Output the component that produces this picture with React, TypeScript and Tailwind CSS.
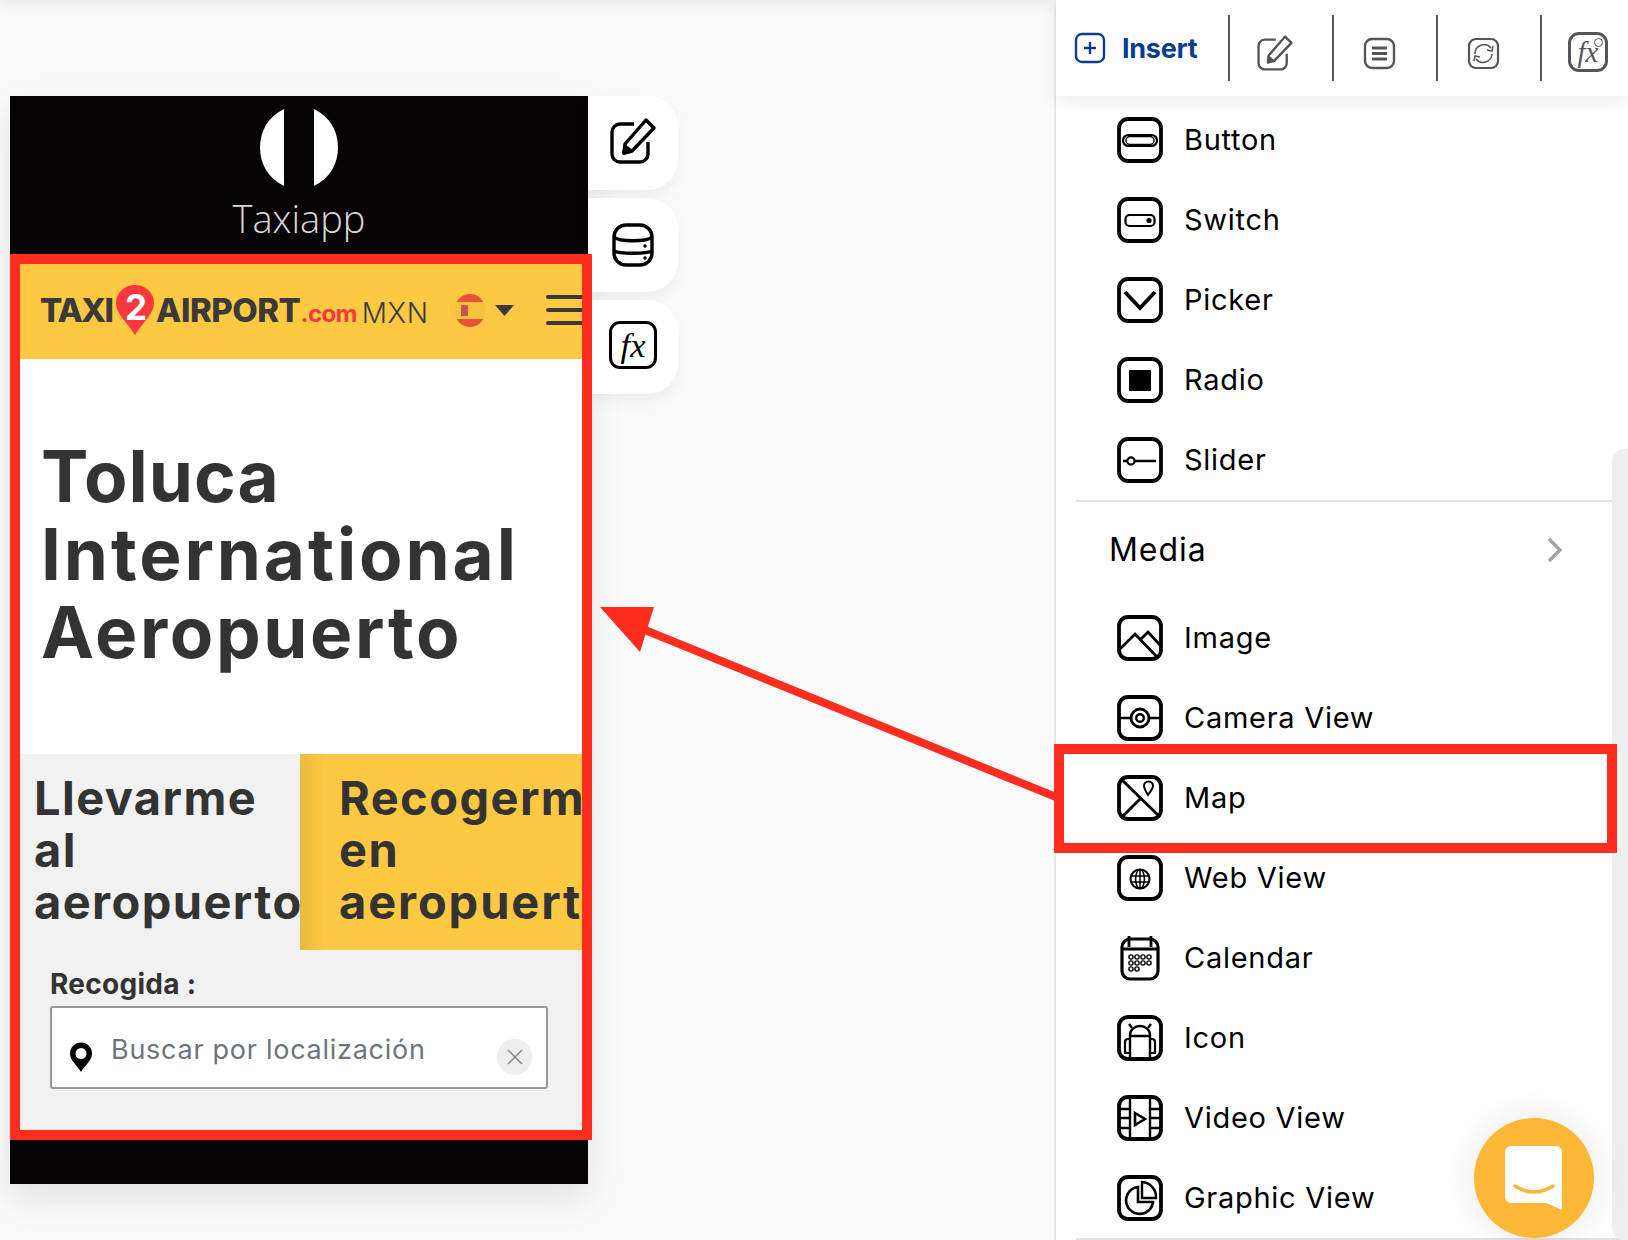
import React from "react";

const font = "font-['Inter','Liberation_Sans',sans-serif]";

function Box({ children }: { children?: React.ReactNode }) {
  return (
    <svg width="46" height="46" viewBox="0 0 46 46" fill="none" stroke="#000" strokeWidth="2.2" className="shrink-0">
      <rect x="2" y="2" width="42" height="42" rx="9" strokeWidth="3.8" />
      {children}
    </svg>
  );
}

const icons: Record<string, React.ReactNode> = {
  Button: (
    <Box>
      <rect x="6" y="18" width="34" height="11" rx="5.5" />
      <rect x="9" y="19.5" width="28" height="8" rx="4" strokeWidth="1.4" />
    </Box>
  ),
  Switch: (
    <Box>
      <rect x="8.5" y="18" width="29" height="11" rx="4" />
      <circle cx="32" cy="23.5" r="2.6" fill="#000" stroke="none" />
    </Box>
  ),
  Picker: (
    <Box>
      <path d="M8 15 L23 31 L38 15" strokeWidth="3.8" />
    </Box>
  ),
  Radio: (
    <Box>
      <rect x="12" y="13" width="22" height="21" fill="#000" stroke="none" />
    </Box>
  ),
  Slider: (
    <Box>
      <circle cx="14" cy="24" r="3.6" />
      <path d="M6 24 H10 M18 24 H39" strokeWidth="2.6" />
    </Box>
  ),
  Image: (
    <Box>
      <path d="M3 34 L18 19 L40 42 M24 24 L31 17 L43 30" strokeWidth="2.8" />
    </Box>
  ),
  "Camera View": (
    <Box>
      <circle cx="23" cy="23" r="9" strokeWidth="2.8" />
      <circle cx="23" cy="23" r="3.8" strokeWidth="2.4" />
      <path d="M3 23 H14 M32 23 H43" strokeWidth="2.6" />
    </Box>
  ),
  Map: (
    <Box>
      <path d="M4 4 L43 42 M4 43 L23 24" strokeWidth="2.9" />
      <path d="M31 20 C28 15 27 13 27 11 A4.4 4.4 0 0 1 36 11 C36 13 34 16 31 20 Z" strokeWidth="2" />
    </Box>
  ),
  "Web View": (
    <Box>
      <circle cx="23" cy="24" r="9.5" strokeWidth="2" />
      <ellipse cx="23" cy="24" rx="4.4" ry="9.5" strokeWidth="1.5" />
      <path d="M23 14.5 V33.5 M14 21 H32 M14 27 H32" strokeWidth="1.5" />
    </Box>
  ),
  Icon: (
    <Box>
      <path d="M13 42 V20 A10 9 0 0 1 33 20 V42 M13 21 H33" strokeWidth="2.4" />
      <path d="M13 24 H11 A3 3 0 0 0 8 27 V38 H13 M33 24 H35 A3 3 0 0 1 38 27 V38 H33 M15 13 L12 9 M31 13 L34 9" strokeWidth="2.2" />
    </Box>
  ),
  "Video View": (
    <Box>
      <path d="M13 3 V43 M33 3 V43 M3 14 H13 M3 23 H13 M3 33 H13 M33 14 H43 M33 23 H43 M33 33 H43" strokeWidth="2.4" />
      <path d="M18 18 L28 24 L18 30 Z" strokeWidth="2.6" />
    </Box>
  ),
  "Graphic View": (
    <Box>
      <path d="M21 12 A13.5 13.5 0 1 0 36 27 H21 Z" strokeWidth="2.6" />
      <path d="M25 7 A15 15 0 0 1 39 23 H25 Z" strokeWidth="2.4" />
    </Box>
  ),
};

function CalendarIcon() {
  const dots: [number, number][] = [];
  [17, 23, 29].forEach((y, r) => {
    [13, 19, 25, 31].slice(0, r === 2 ? 2 : 4).forEach((x) => dots.push([x + 1, y + 5]));
  });
  return (
    <svg width="46" height="46" viewBox="0 0 46 46" fill="none" stroke="#000" className="shrink-0">
      <rect x="5" y="4" width="36" height="40" rx="8" strokeWidth="3.2" />
      <path d="M5 14 H41 M12 1 V12 M34 1 V12" strokeWidth="2.8" />
      {dots.map(([x, y]) => (
        <circle key={x + "-" + y} cx={x} cy={y} r="2.1" strokeWidth="1.4" />
      ))}
    </svg>
  );
}

function Pencil({ size, color, sw }: { size: number; color: string; sw: number }) {
  return (
    <svg width={size} height={size} viewBox="0 0 46 46" fill="none" stroke={color} strokeWidth={sw} strokeLinejoin="round">
      <path d="M24 6 H10 A8 8 0 0 0 2 14 V36 A8 8 0 0 0 10 44 H30 A8 8 0 0 0 38 36 V24" />
      <path d="M36 2 L44 10 L22 33 L14 35 L15 26 Z" />
      <path d="M14 35 L15 28 L21 33 Z" fill={color} />
    </svg>
  );
}

function Database() {
  return (
    <svg width="44" height="44" viewBox="0 0 44 44" fill="none" stroke="#000" strokeWidth="3.4">
      <rect x="3" y="2" width="38" height="40" rx="12" />
      <path d="M3 14 C8 19 36 19 41 14 M3 28 C8 31 36 31 41 28" />
      <circle cx="34" cy="23" r="1.8" fill="#000" stroke="none" />
      <circle cx="34" cy="35" r="1.8" fill="#000" stroke="none" />
    </svg>
  );
}

function Fx({ size, color, sw, plus }: { size: number; color: string; sw: number; plus?: boolean }) {
  return (
    <div
      className="relative flex items-center justify-center rounded-[11px] font-['Liberation_Serif',serif] italic"
      style={{ width: size, height: size, border: `${sw}px solid ${color}`, color, fontSize: size * 0.72, lineHeight: 1 }}
    >
      <span>fx</span>
      {plus && <span className="absolute right-[2px] top-[3px] h-[9px] w-[9px] rounded-full border border-[#555]" />}
    </div>
  );
}

function Row({ name }: { name: string }) {
  return (
    <div className="flex h-[80px] items-center pl-[61px]">
      {name === "Calendar" ? <CalendarIcon /> : icons[name]}
      <span className="mb-[1px] ml-[21px] text-[29px] leading-none tracking-[0.025em] text-black">{name}</span>
    </div>
  );
}

function TaxiLogo() {
  return (
    <div className="flex shrink-0 items-center font-extrabold text-[#3a3a3a]">
      <span className="text-[33px] leading-none tracking-[-0.055em]">TAXI</span>
      <svg width="40" height="52" viewBox="0 0 40 52" className="ml-[3px] mr-[1px] shrink-0">
        <path d="M20 51 C12 38 1 30 1 19 A19 18 0 0 1 39 19 C39 30 28 38 20 51 Z" fill="#f9373f" />
      </svg>
      <span className="absolute left-[115px] top-[26px] text-[35px] font-bold leading-none text-white">2</span>
      <span className="text-[33px] leading-none tracking-[-0.015em]">AIRPORT</span>
      <span className="mt-[7px] text-[24px] font-bold leading-none tracking-[-0.025em] text-[#f9373f]">.com</span>
    </div>
  );
}

export default function App() {
  return (
    <div className={`relative flex h-[1240px] w-[1628px] overflow-hidden bg-[#fafafa] ${font}`}>
      <div className="absolute left-0 top-0 h-0 w-[1055px] shadow-[0_0_14px_4px_rgba(0,0,0,0.1)]" />

      {/* canvas */}
      <div className="flex w-[1054px] shrink-0 items-start pl-[10px] pt-[96px]">
        <div className="h-[1088px] w-[578px] shrink-0 overflow-hidden bg-[#070203] shadow-[0_14px_34px_rgba(0,0,0,0.1)]">
          <div className="flex h-[168px] flex-col items-center pt-[13px]">
            <svg width="78" height="77" viewBox="0 0 78 77">
              <path d="M24 0 C8 8 0 22 0 38.500 C0 55 8 69 24 77 Z M54 0 C70 8 78 22 78 38.500 C78 55 70 69 54 77 Z" fill="#fff" />
            </svg>
            <span className="mt-[7px] font-['Open_Sans',sans-serif] text-[38px] font-light leading-[50px] text-[#d8d8d8]">Taxiapp</span>
          </div>

          <div className="relative flex h-[95px] items-center overflow-hidden bg-[#fec942] pb-[3px] pl-[30px]">
            <TaxiLogo />
            <span className="ml-[5px] mt-[6px] shrink-0 text-[28px] font-light leading-none tracking-[0.02em] text-[#3a3a3a]">MXN</span>
            <div className="relative ml-[26px] h-[33px] w-[30px] shrink-0 overflow-hidden rounded-full bg-[#f3c33a]">
              <div className="h-[8px] bg-[#e8523b]" />
              <div className="absolute bottom-0 h-[8px] w-full bg-[#e8523b]" />
              <div className="absolute left-[6px] top-[11px] h-[11px] w-[7px] bg-[#c9554a]" />
            </div>
            <svg width="19" height="11" viewBox="0 0 19 11" className="ml-[10px] shrink-0">
              <path d="M0 0 H19 L9.5 11 Z" fill="#3a3a3a" />
            </svg>
            <div className="ml-[32px] flex shrink-0 flex-col gap-[9px]">
              <div className="h-[4px] w-[40px] rounded-l-full bg-[#3a3a3a]" />
              <div className="h-[4px] w-[40px] rounded-l-full bg-[#3a3a3a]" />
              <div className="h-[4px] w-[40px] rounded-l-full bg-[#3a3a3a]" />
            </div>
          </div>

          <div className="h-[395px] bg-white pl-[31px] pt-[78px] text-[71px] font-bold leading-[78px] text-[#333]">
            <div className="tracking-[0.015em]">Toluca</div>
            <div className="tracking-[0.041em]">International</div>
            <div className="tracking-[0.037em]">Aeropuerto</div>
          </div>

          <div className="flex h-[196px] text-[47px] font-bold leading-[52px] tracking-[0.03em] text-[#333]">
            <div className="w-[290px] shrink-0 overflow-hidden bg-[#f1f1f1] pl-[24px] pt-[18px]">
              <div>Llevarme</div>
              <div>al</div>
              <div>aeropuerto</div>
            </div>
            <div className="flex-1 overflow-hidden whitespace-nowrap bg-[#fec942] bg-[linear-gradient(90deg,#e8b93f_0,#fec942_24px)] pl-[39px] pt-[18px]">
              <div>Recogerme</div>
              <div>en</div>
              <div className="tracking-[0.04em]">aeropuerto</div>
            </div>
          </div>

          <div className="h-[180px] bg-[#f1f1f1] pl-[40px] pt-[16px]">
            <div className="text-[28px] font-bold leading-[36px] tracking-[0.01em] text-[#333]">Recogida :</div>
            <div className="relative mt-[4px] flex h-[83px] w-[498px] items-center rounded-[3px] border-2 border-[#989898] bg-white pl-[17px]">
              <svg width="24" height="30" viewBox="0 0 24 30" className="mt-[18px] shrink-0">
                <path d="M12 30 C9 24 1 19 1 11.500 A11 11 0 0 1 23 11.500 C23 19 15 24 12 30 Z M12 6 A5.500 5.500 0 1 0 12 17 A5.500 5.500 0 1 0 12 6 Z" fill="#000" fillRule="evenodd" />
              </svg>
              <span className="ml-[18px] mt-[4px] text-[27px] font-normal leading-none tracking-[0.027em] text-[#6c757d]">Buscar por localización</span>
              <div className="absolute left-[445px] top-[31px] flex h-[36px] w-[35px] items-center justify-center rounded-full bg-[#eeeeee]">
                <svg width="16" height="16" viewBox="0 0 16 16" stroke="#888" strokeWidth="1.5">
                  <path d="M1 1 L15 15 M15 1 L1 15" />
                </svg>
              </div>
            </div>
          </div>
        </div>

        <div className="flex w-[90px] shrink-0 flex-col gap-[8px]">
          <div className="flex h-[94px] items-center justify-center rounded-r-[30px] bg-white pb-[4px] shadow-[0_8px_14px_rgba(0,0,0,0.05)]">
            <Pencil size={46} color="#000" sw={3.4} />
          </div>
          <div className="flex h-[94px] items-center justify-center rounded-r-[30px] bg-white shadow-[0_8px_14px_rgba(0,0,0,0.05)]">
            <Database />
          </div>
          <div className="flex h-[94px] items-center justify-center rounded-r-[30px] bg-white pb-[4px] shadow-[0_8px_14px_rgba(0,0,0,0.05)]">
            <Fx size={48} color="#000" sw={3.4} />
          </div>
        </div>
      </div>

      {/* right panel */}
      <div className="relative flex h-[1240px] flex-1 flex-col border-l-2 border-[#e8e8e8] bg-white">
        <div className="relative z-10 flex h-[96px] shrink-0 items-center bg-white pl-[18px] shadow-[0_6px_16px_rgba(0,0,0,0.07)]">
          <svg width="32" height="32" viewBox="0 0 32 32" fill="none" stroke="#0a3d91" strokeWidth="2.4">
            <rect x="2" y="2" width="28" height="28" rx="6" />
            <path d="M16 10 V22 M10 16 H22" />
          </svg>
          <span className="ml-[16px] w-[106px] text-[27px] font-bold leading-none tracking-[-0.01em] text-[#0a3d91]">Insert</span>
          <div className="h-[66px] w-[2px] bg-[#555]" />
          <div className="flex h-[66px] w-[102px] items-center justify-center pr-[12px] pt-[10px]"><Pencil size={36} color="#555" sw={3} /></div>
          <div className="h-[66px] w-[2px] bg-[#555]" />
          <div className="flex h-[66px] w-[102px] items-center justify-center pr-[12px] pt-[10px]">
            <svg width="33" height="33" viewBox="0 0 33 33" fill="none" stroke="#555" strokeWidth="2.4">
              <rect x="2" y="2" width="29" height="29" rx="7" />
              <path d="M9 11 H24 M9 16.500 H24 M9 22 H24" strokeWidth="2.8" />
            </svg>
          </div>
          <div className="h-[66px] w-[2px] bg-[#555]" />
          <div className="flex h-[66px] w-[102px] items-center justify-center pr-[12px] pt-[10px]">
            <svg width="33" height="33" viewBox="0 0 33 33" fill="none" stroke="#555" strokeWidth="2.2">
              <rect x="2" y="2" width="29" height="29" rx="7" />
              <path d="M8 17 A9 9 0 0 1 24 11 M26 9 L25 14 L20 13 M25 17 A9 9 0 0 1 9 22 M7 24 L8 19 L13 20" strokeWidth="1.5" />
            </svg>
          </div>
          <div className="h-[66px] w-[2px] bg-[#555]" />
          <div className="flex h-[66px] w-[86px] items-center justify-center pl-[6px] pt-[8px]">
            <Fx size={40} color="#555" sw={3} plus />
          </div>
        </div>

        <div className="pt-[4px]">
          {["Button", "Switch", "Picker", "Radio", "Slider"].map((n) => (
            <Row key={n} name={n} />
          ))}
        </div>
        <div className="ml-[20px] mr-[5px] h-[2px] shrink-0 bg-[#e2e2e2]" />
        <div className="flex h-[96px] shrink-0 items-center justify-between pl-[53px] pr-[65px]">
          <span className="text-[32px] leading-none tracking-[0.03em] text-black">Media</span>
          <svg width="16" height="26" viewBox="0 0 16 26" fill="none" stroke="#a3a3a3" strokeWidth="3.4">
            <path d="M2 2 L13 13 L2 24" />
          </svg>
        </div>
        <div>
          {["Image", "Camera View", "Map", "Web View", "Calendar", "Icon", "Video View", "Graphic View"].map((n) => (
            <Row key={n} name={n} />
          ))}
        </div>
        <div className="ml-[20px] mr-[5px] h-[2px] shrink-0 bg-[#e2e2e2]" />

        <div className="absolute right-0 top-[449px] h-[791px] w-[16px] rounded-l-[12px] bg-[#eeeeee]" />
      </div>

      {/* overlays */}
      <div className="pointer-events-none absolute left-[10px] top-[254px] h-[886px] w-[582px] border-[10px] border-[#ff2d20]" />
      <div className="pointer-events-none absolute left-[1054px] top-[744px] h-[109px] w-[563px] border-[10px] border-[#ff2d20]" />
      <svg className="pointer-events-none absolute left-0 top-0" width="1628" height="1240" fill="none">
        <path d="M1056 797 L640 628" stroke="#ff2d20" strokeWidth="8" />
        <path d="M600 607 L654 607 L640 652 Z" fill="#ff2d20" />
      </svg>

      {/* chat bubble */}
      <div className="absolute left-[1474px] top-[1118px] h-[120px] w-[120px] rounded-full bg-[#fdb736] shadow-[0_0_40px_rgba(0,0,0,0.1)]">
        <svg width="120" height="120" viewBox="0 0 120 120" fill="none">
          <path d="M37 28 H82 A6 6 0 0 1 88 34 V92 L72 85 H37 A6 6 0 0 1 31 79 V34 A6 6 0 0 1 37 28 Z" fill="#fff" />
          <path d="M41 68 Q60 80 79 68" stroke="#fdb736" strokeWidth="3.4" strokeLinecap="round" />
        </svg>
      </div>
    </div>
  );
}
